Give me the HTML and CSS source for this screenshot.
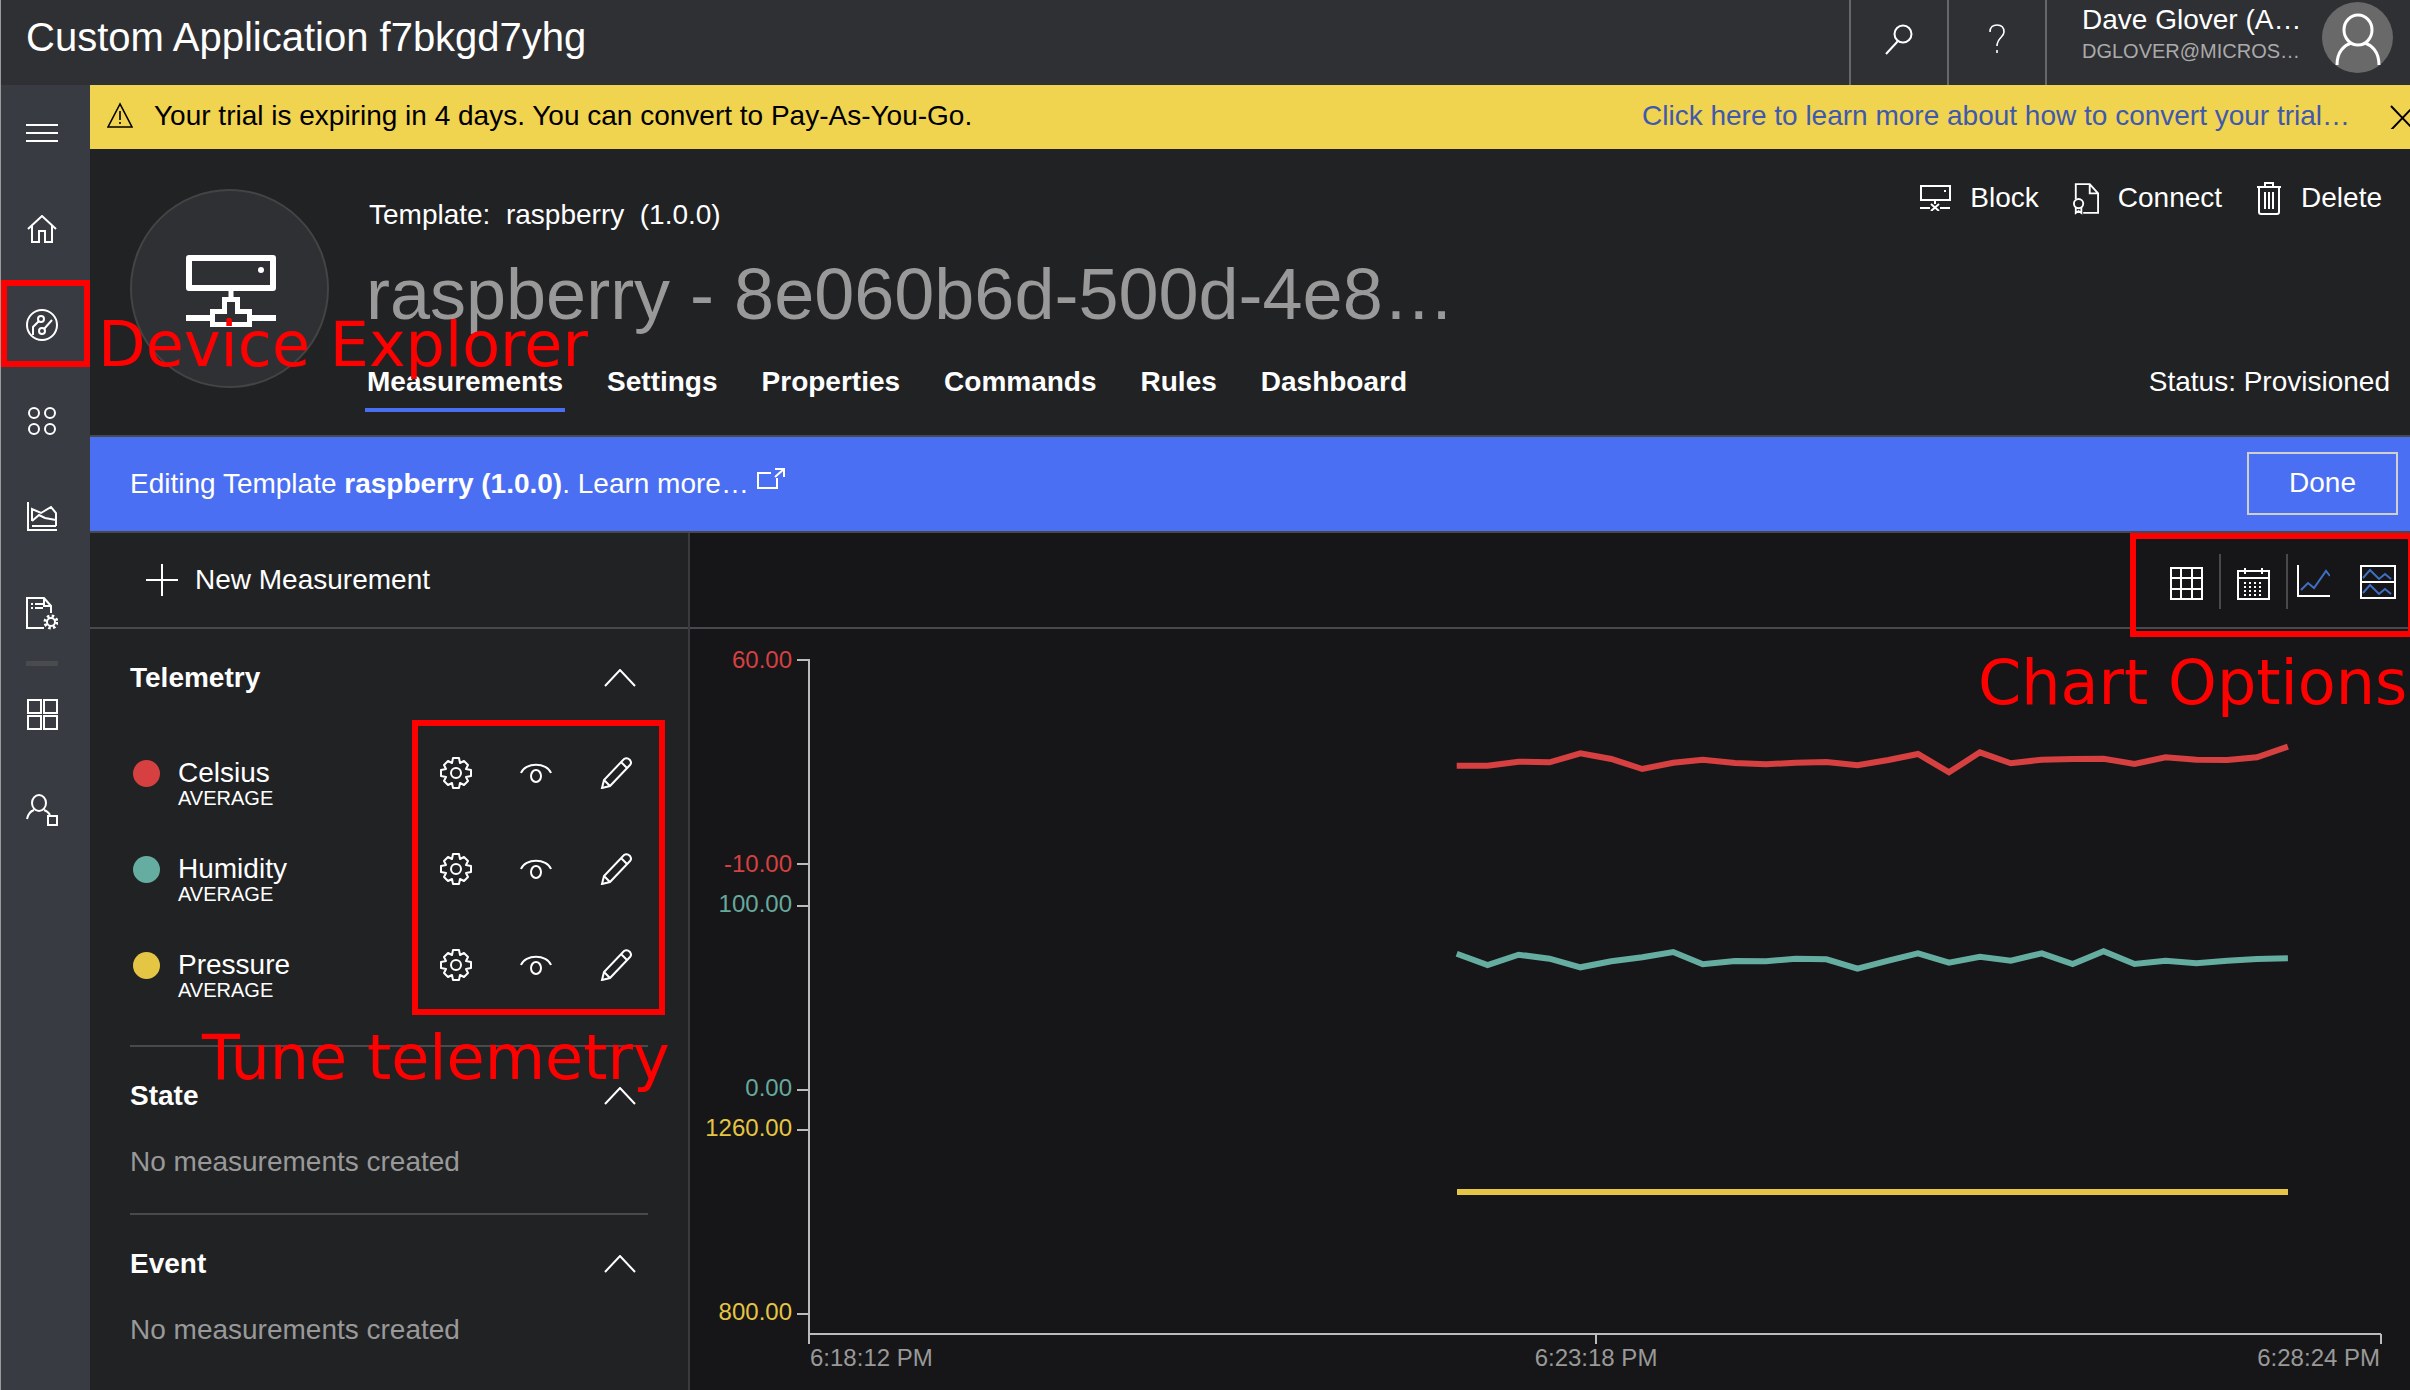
FILE: index.html

```html
<!DOCTYPE html>
<html lang="en">
<head>
    <meta charset="UTF-8">
    <title>Custom Application f7bkgd7yhg</title>
    <link rel="stylesheet" href="styles.css">
</head>
<body>

    <!-- Top bar -->
    <header class="topbar">
        <div class="app-title">Custom Application f7bkgd7yhg</div>
        <div class="top-cell">
            <svg width="30" height="32" viewBox="0 0 30 32" fill="none" stroke="#fff" stroke-width="2"><circle cx="19" cy="11" r="8.5"/><path d="M14 18L2 31"/></svg>
        </div>
        <div class="top-cell">
            <svg width="16" height="30" viewBox="0 0 16 30" fill="none" stroke="#fff" stroke-width="1.6"><path d="M1 8C1 3 4 1 8 1C12 1 15 3 15 8C15 13 8 14 8 22M8 26V29"/></svg>
        </div>
        <div class="user">
            <div class="user-text">
                <div class="user-name">Dave Glover (A…</div>
                <div class="user-mail">DGLOVER@MICROS…</div>
            </div>
            <div class="user-avatar">
                <svg width="46" height="52" viewBox="0 0 46 52" fill="none" stroke="#fff" stroke-width="3"><ellipse cx="23" cy="17" rx="14" ry="15"/><path d="M2 52C2 38 10 32 16 30M44 52C44 38 36 32 30 30"/></svg>
            </div>
        </div>
    </header>

    <div class="main">

        <!-- Left navigation -->
        <nav class="sidenav">
            <div class="nav-item">
                <svg width="32" height="20" viewBox="0 0 32 20" fill="none" stroke="#fff" stroke-width="2"><path d="M0 2H32M0 10H32M0 18H32"/></svg>
            </div>
            <div class="nav-item">
                <svg width="30" height="28" viewBox="0 0 30 28" fill="none" stroke="#fff" stroke-width="2"><path d="M1 14L15 1L29 14M5 11V27H12V16H18V27H25V11"/></svg>
            </div>
            <div class="nav-item">
                <svg width="32" height="32" viewBox="0 0 32 32" fill="none" stroke="#fff" stroke-width="2"><circle cx="16" cy="16" r="15"/><circle cx="15" cy="10" r="3"/><circle cx="16" cy="22" r="3"/><path d="M13 12L7 18V26M18 20L26 11"/></svg>
            </div>
            <div class="nav-item">
                <svg width="30" height="30" viewBox="0 0 30 30" fill="none" stroke="#fff" stroke-width="2"><circle cx="7" cy="7" r="5"/><circle cx="23" cy="7" r="5"/><circle cx="7" cy="23" r="5"/><circle cx="23" cy="23" r="5"/></svg>
            </div>
            <div class="nav-item">
                <svg width="30" height="30" viewBox="0 0 30 30" fill="none" stroke="#fff" stroke-width="2"><path d="M1 0V28H30M5 24H29M5 19L12 13L18 16L29 18M5 19V7L14 11L24 5L29 11V24"/></svg>
            </div>
            <div class="nav-item">
                <svg width="32" height="33" viewBox="0 0 32 33" fill="none" stroke="#fff" stroke-width="2"><path d="M18 31H1V1H18L25 9V16M18 1V9H25M5 7H7M9 7H17M5 11H7M9 11H17"/><circle cx="25" cy="25" r="4"/><circle cx="25" cy="25" r="6" stroke-dasharray="2.5 2.2" stroke-width="3"/></svg>
            </div>
            <div class="nav-divider"></div>
            <div class="nav-item">
                <svg width="31" height="31" viewBox="0 0 31 31" fill="none" stroke="#fff" stroke-width="2"><path d="M1 1H14V14H1ZM17 1H30V14H17ZM1 17H14V30H1ZM17 17H30V30H17Z"/></svg>
            </div>
            <div class="nav-item">
                <svg width="32" height="32" viewBox="0 0 32 32" fill="none" stroke="#fff" stroke-width="2"><ellipse cx="13" cy="9" rx="7" ry="8"/><path d="M1 25C2 20 5 17 8 16M18 16C21 17 23 19 24 21"/><path d="M22 23H31V32H22Z" transform="translate(0 -1)"/></svg>
            </div>
        </nav>

        <div class="content">

            <!-- Trial banner -->
            <div class="banner">
                <svg class="banner-icon" width="26" height="26" viewBox="0 0 26 26" fill="none" stroke="#000" stroke-width="1.6"><path d="M13 2L1 25H25Z"/><path d="M13 9V18M13 20V22"/></svg>
                <span class="banner-text">Your trial is expiring in 4 days. You can convert to Pay-As-You-Go.</span>
                <a class="banner-link">Click here to learn more about how to convert your trial…</a>
                <svg class="banner-close" width="20" height="24" viewBox="0 0 20 24" fill="none" stroke="#000" stroke-width="2"><path d="M1 1L24 25M24 1L1 25"/></svg>
            </div>

            <!-- Device header -->
            <section class="device-head">
                <div class="device-pic">
                    <svg width="90" height="72" viewBox="0 0 90 72" fill="none" stroke="#fff" stroke-width="6">
                        <path d="M3 3H87V33H3Z" stroke-linejoin="round"/>
                        <circle cx="75" cy="15" r="3" fill="#fff" stroke="none"/>
                        <path d="M45 36V42M38.5 44.5H51.5V56.5H63.5V69.5H26.5V56.5H38.5Z" stroke-width="5"/>
                        <path d="M0 63H24M66 63H90"/>
                        <rect x="41" y="63" width="4" height="7" fill="#f00" stroke="none"/>
                    </svg>
                </div>
                <div class="device-info">
                    <div class="template-line">Template:&nbsp; raspberry &nbsp;(1.0.0)</div>
                    <h1 class="device-name">raspberry - 8e060b6d-500d-4e8…</h1>
                    <div class="tabs">
                        <span class="tab tab-active">Measurements</span>
                        <span class="tab">Settings</span>
                        <span class="tab">Properties</span>
                        <span class="tab">Commands</span>
                        <span class="tab">Rules</span>
                        <span class="tab">Dashboard</span>
                    </div>
                </div>
                <div class="device-side">
                    <div class="actions">
                        <span class="action">
                            <svg width="32" height="26" viewBox="0 0 32 26" fill="none" stroke="#fff" stroke-width="2"><path d="M2 1H31V15H2ZM16 15V19M1 23H11M21 23H31M12 19L20 26M20 19L12 26"/><path d="M25 6H27"/></svg>
                            Block
                        </span>
                        <span class="action">
                            <svg width="26" height="33" viewBox="0 0 28 33" fill="none" stroke="#fff" stroke-width="2"><path d="M3 17V1H18L27 11V32H11M18 1V11H27"/><circle cx="6" cy="22" r="5"/><path d="M3 26V32L6 30L9 32V26"/></svg>
                            Connect
                        </span>
                        <span class="action">
                            <svg width="26" height="33" viewBox="0 0 26 33" fill="none" stroke="#fff" stroke-width="2"><path d="M1 5H25M3 5V30Q3 32 5 32H21Q23 32 23 30V5M9 5V1H17V5M9 10V27M13 10V27M17 10V27"/></svg>
                            Delete
                        </span>
                    </div>
                    <div class="status">Status: Provisioned</div>
                </div>
            </section>

            <!-- Editing bar -->
            <div class="edit-bar">
                <span class="edit-text">Editing Template <b>raspberry (1.0.0)</b>. Learn more…</span>
                <svg class="edit-link" width="28" height="22" viewBox="0 0 28 22" fill="none" stroke="#fff" stroke-width="2"><path d="M14 5H1V20H20V10M18 1H27V9M27 1L18 9"/></svg>
                <button class="done-btn">Done</button>
            </div>

            <div class="workspace">

                <!-- Measurements list -->
                <aside class="measures">
                    <div class="new-measure">
                        <svg width="32" height="32" viewBox="0 0 32 32" fill="none" stroke="#fff" stroke-width="2"><path d="M16 0V32M0 16H32"/></svg>
                        New Measurement
                    </div>
                    <div class="group">
                        <div class="group-head">
                            <span>Telemetry</span>
                            <svg class="chevron" width="32" height="18" viewBox="0 0 32 18" fill="none" stroke="#fff" stroke-width="2"><path d="M1 17L16 1L31 17"/></svg>
                        </div>
                        <div class="row">
                            <span class="dot dot-red"></span>
                            <div class="row-text"><div class="row-name">Celsius</div><div class="row-sub">AVERAGE</div></div>
                            <div class="row-icons">
                                <svg width="32" height="32"><use href="#ico-gear"/></svg>
                                <svg width="32" height="32"><use href="#ico-eye"/></svg>
                                <svg width="32" height="32"><use href="#ico-pen"/></svg>
                            </div>
                        </div>
                        <div class="row">
                            <span class="dot dot-teal"></span>
                            <div class="row-text"><div class="row-name">Humidity</div><div class="row-sub">AVERAGE</div></div>
                            <div class="row-icons">
                                <svg width="32" height="32"><use href="#ico-gear"/></svg>
                                <svg width="32" height="32"><use href="#ico-eye"/></svg>
                                <svg width="32" height="32"><use href="#ico-pen"/></svg>
                            </div>
                        </div>
                        <div class="row">
                            <span class="dot dot-yellow"></span>
                            <div class="row-text"><div class="row-name">Pressure</div><div class="row-sub">AVERAGE</div></div>
                            <div class="row-icons">
                                <svg width="32" height="32"><use href="#ico-gear"/></svg>
                                <svg width="32" height="32"><use href="#ico-eye"/></svg>
                                <svg width="32" height="32"><use href="#ico-pen"/></svg>
                            </div>
                        </div>
                    </div>
                    <div class="group group-empty">
                        <div class="group-head">
                            <span>State</span>
                            <svg class="chevron" width="32" height="18" viewBox="0 0 32 18" fill="none" stroke="#fff" stroke-width="2"><path d="M1 17L16 1L31 17"/></svg>
                        </div>
                        <div class="empty-note">No measurements created</div>
                    </div>
                    <div class="group group-empty">
                        <div class="group-head">
                            <span>Event</span>
                            <svg class="chevron" width="32" height="18" viewBox="0 0 32 18" fill="none" stroke="#fff" stroke-width="2"><path d="M1 17L16 1L31 17"/></svg>
                        </div>
                        <div class="empty-note">No measurements created</div>
                    </div>
                </aside>

                <!-- Chart -->
                <main class="chart-pane">
                    <div class="chart-tools">
                        <svg width="33" height="33" viewBox="0 0 33 33" fill="none" stroke="#fff" stroke-width="2"><path d="M1 1H32V32H1ZM11 1V32M22 1V32M1 11H32M1 22H32"/></svg>
                        <span class="tool-sep"></span>
                        <svg width="33" height="33" viewBox="0 0 33 33" fill="none" stroke="#fff" stroke-width="2"><path d="M1 4H32V32H1ZM1 11H32M8 1V7M25 1V7"/><path d="M7 16H26M7 20H26M7 24H26M7 28H26" stroke-dasharray="2 3"/></svg>
                        <span class="tool-sep"></span>
                        <svg class="tool-line" width="33" height="33" viewBox="0 0 33 33" fill="none"><path d="M1 0V31H33" stroke="#fff" stroke-width="2"/><path d="M4 25L11 18L17 23L29 6L33 11" stroke="#3f6fc4" stroke-width="2"/></svg>
                        <svg class="tool-area" width="36" height="34" viewBox="0 0 36 34" fill="none"><path d="M1 1H35V33H1ZM1 17H35" stroke="#fff" stroke-width="2"/><path d="M3 13L10 5L19 14L25 9L31 14M3 28L10 20L19 29L25 24L31 29" stroke="#3f6fc4" stroke-width="2"/></svg>
                    </div>
                    <svg class="chart" viewBox="690 628 1720 762" width="1720" height="762" font-family="'Liberation Sans', sans-serif" font-size="24">
                        <g stroke="#bbb" stroke-width="2" fill="none">
                            <path d="M809 659V1344M808 1334H2381"/>
                            <path d="M797 660H809M797 864H809M797 906H809M797 1090H809M797 1130H809M797 1314H809"/>
                            <path d="M1596 1334V1344M2381 1334V1344"/>
                        </g>
                        <g text-anchor="end">
                            <text x="792" y="668" fill="#d64040">60.00</text>
                            <text x="792" y="872" fill="#d64040">-10.00</text>
                            <text x="792" y="912" fill="#66a99d">100.00</text>
                            <text x="792" y="1096" fill="#66a99d">0.00</text>
                            <text x="792" y="1136" fill="#e4c544">1260.00</text>
                            <text x="792" y="1320" fill="#e4c544">800.00</text>
                        </g>
                        <g fill="#999">
                            <text x="810" y="1366">6:18:12 PM</text>
                            <text x="1596" y="1366" text-anchor="middle">6:23:18 PM</text>
                            <text x="2380" y="1366" text-anchor="end">6:28:24 PM</text>
                        </g>
                        <g fill="none" stroke-width="6">
                            <polyline stroke="#d64040" points="1456.7,765.7 1487.6,765.7 1518.6,761.7 1549.5,762.3 1580.4,753.3 1611.3,759 1642.3,769 1673.2,762.7 1702.8,759.7 1735,763 1766,764.3 1795.6,762.7 1826.5,762 1857.5,765.3 1888.4,760 1918,754 1949,772.3 1979.9,752.3 2010.8,763.3 2041.8,759.7 2072.7,759 2103.6,758.7 2134.5,764 2165.5,757.3 2196.4,759.7 2227.3,760 2257,757.3 2287.9,746.7"/>
                            <polyline stroke="#66ada1" points="1456.7,953.7 1487.6,965 1518.6,954.7 1549.5,958.7 1580.4,967.3 1611.3,961.3 1642.3,957.3 1673.2,952 1702.8,964.3 1735,961 1766,961.3 1795.6,958.7 1826.5,959.3 1857.5,968.7 1888.4,960.7 1918,953.3 1949,962.7 1979.9,956.7 2010.8,960.7 2041.8,953.3 2072.7,964 2103.6,951.3 2134.5,964 2165.5,960.7 2196.4,963.3 2227.3,960.7 2257,959 2287.9,958.3"/>
                            <path stroke="#e4c544" d="M1457 1192H2288"/>
                        </g>
                    </svg>
                </main>
            </div>
        </div>
    </div>

    <!-- Red annotations drawn over the screenshot -->
    <div class="mark mark-device"></div>
    <div class="mark mark-tune"></div>
    <div class="mark mark-chart"></div>
    <div class="mark-text text-device">Device Explorer</div>
    <div class="mark-text text-tune">Tune telemetry</div>
    <div class="mark-text text-chart">Chart Options</div>

    <!-- Shared row icons -->
    <svg class="icon-defs" width="0" height="0">
        <defs>
            <g id="ico-gear" fill="none" stroke="#fff" stroke-width="2">
                <circle cx="16" cy="16" r="5"/>
                <path d="M13 1H19L20 6L24 4L28 8L26 12L31 13V19L26 20L28 24L24 28L20 26L19 31H13L12 26L8 28L4 24L6 20L1 19V13L6 12L4 8L8 4L12 6Z" stroke-linejoin="round"/>
            </g>
            <g id="ico-eye" fill="none" stroke="#fff" stroke-width="2">
                <path d="M1 16C5 5 27 5 31 16"/>
                <ellipse cx="16" cy="19" rx="5" ry="6"/>
            </g>
            <g id="ico-pen" fill="none" stroke="#fff" stroke-width="2">
                <path d="M2 31L4 23L24 2Q27 0 30 3Q32 6 30 8L10 29ZM4 23L10 29M21 5L27 11"/>
            </g>
        </defs>
    </svg>

</body>
</html>
```

FILE: styles.css

```css
* {
    box-sizing: border-box;
}

html, body {
    margin: 0;
    height: 100%;
}

body {
    width: 2410px;
    height: 1390px;
    overflow: hidden;
    position: relative;
    padding-left: 1px;
    background-color: #9a9a9a;
    font-family: "Liberation Sans", Arial, sans-serif;
    font-size: 28px;
    color: #fff;
}

/* Top bar */
.topbar {
    display: flex;
    height: 85px;
    background-color: #2f3034;
}

.app-title {
    flex: 1;
    padding: 12px 0 0 25px;
    font-size: 40px;
    line-height: 50px;
}

.top-cell {
    display: flex;
    align-items: center;
    justify-content: center;
    width: 98px;
    border-left: 2px solid #66676a;
    padding-bottom: 8px;
}

.user {
    display: flex;
    width: 365px;
    border-left: 2px solid #66676a;
    padding-left: 35px;
}

.user-text {
    width: 240px;
}

.user-name {
    padding-top: 3px;
    line-height: 34px;
}

.user-mail {
    padding-top: 2px;
    font-size: 20px;
    line-height: 24px;
    color: #aaa;
}

.user-avatar {
    display: flex;
    align-items: flex-end;
    justify-content: center;
    width: 71px;
    height: 71px;
    margin-top: 2px;
    padding-bottom: 8px;
    border-radius: 50%;
    background-color: #696969;
}

.main {
    display: flex;
    height: 1305px;
}

/* Left navigation */
.sidenav {
    width: 89px;
    flex-shrink: 0;
    background-color: #383b42;
}

.nav-item {
    display: flex;
    align-items: center;
    justify-content: center;
    height: 96px;
    padding-right: 7px;
}

.nav-divider {
    width: 32px;
    height: 5px;
    margin-left: 25px;
    background-color: #4a4b4e;
}

.content {
    width: 2320px;
    flex-shrink: 0;
}

/* Banner */
.banner {
    display: flex;
    align-items: center;
    height: 64px;
    padding-left: 17px;
    background-color: #f0d34f;
    color: #000;
}

.banner-icon {
    margin-bottom: 4px;
}

.banner-text {
    flex: 1;
    margin: 0 0 2px 21px;
}

.banner-link {
    width: 748px;
    margin-bottom: 2px;
    color: #3f59ac;
}

.banner-close {
    flex-shrink: 0;
}

/* Device header */
.device-head {
    display: flex;
    height: 288px;
    border-bottom: 2px solid #48494c;
    background-color: #212224;
}

.device-pic {
    display: flex;
    align-items: center;
    justify-content: center;
    flex-shrink: 0;
    width: 199px;
    height: 199px;
    margin: 40px 0 0 40px;
    padding: 5px 0 0 3px;
    border: 2px solid #444;
    border-radius: 50%;
    background-color: #2f3034;
}

.device-info {
    flex: 1;
    padding: 48px 0 0 37px;
}

.template-line {
    padding-left: 3px;
    line-height: 36px;
}

.device-name {
    margin: 19px 0 0;
    font-size: 72px;
    font-weight: 400;
    line-height: 84px;
    color: #999;
}

.tabs {
    display: flex;
    gap: 40px;
    margin: 29px 0 0 -1px;
}

.tab {
    height: 47px;
    padding: 0 2px;
    font-weight: 700;
    line-height: 34px;
}

.tab-active {
    border-bottom: 4px solid #4a6ef0;
}

.device-side {
    display: flex;
    flex-direction: column;
    justify-content: space-between;
    align-items: flex-end;
    padding: 30px 20px 37px 0;
}

.actions {
    display: flex;
    gap: 34px;
    margin-right: 8px;
}

.action {
    display: flex;
    align-items: center;
    gap: 19px;
    height: 38px;
}

/* Editing bar */
.edit-bar {
    display: flex;
    align-items: center;
    height: 96px;
    padding: 0 12px 0 40px;
    border-bottom: 2px solid #48494c;
    background-color: #4b6ff2;
}

.edit-link {
    flex: 1;
    margin: 0 0 10px 8px;
    max-width: 28px;
}

.done-btn {
    width: 151px;
    height: 63px;
    margin-left: auto;
    margin-bottom: 2px;
    border: 2px solid #cfcfcf;
    background: none;
    color: #fff;
    font: inherit;
}

/* Workspace */
.workspace {
    display: flex;
    height: 857px;
}

.measures {
    width: 600px;
    flex-shrink: 0;
    border-right: 2px solid #3a3b3e;
    background-color: #212224;
}

.new-measure {
    display: flex;
    align-items: center;
    gap: 17px;
    height: 96px;
    padding-left: 56px;
    border-bottom: 2px solid #48494c;
}

.group {
    width: 518px;
    margin-left: 40px;
}

.group-head {
    display: flex;
    align-items: center;
    justify-content: space-between;
    height: 40px;
    margin-top: 29px;
    padding-right: 12px;
    font-weight: 700;
}

.row {
    display: flex;
    align-items: center;
    height: 96px;
}

.group-head + .row {
    margin-top: 27px;
}

.dot {
    width: 27px;
    height: 27px;
    margin-left: 3px;
    border-radius: 50%;
}

.dot-red { background-color: #d64040; }
.dot-teal { background-color: #66ada1; }
.dot-yellow { background-color: #e4c544; }

.row-text {
    width: 262px;
    height: 30px;
    margin-left: 18px;
}

.row-name {
    line-height: 30px;
}

.row-sub {
    font-size: 20px;
    line-height: 20px;
}

.row-icons {
    display: flex;
    gap: 48px;
}

.group-empty {
    border-top: 2px solid #48494c;
    height: 168px;
}

.group-empty:nth-child(3) {
    margin-top: 32px;
}

.empty-note {
    margin-top: 26px;
    line-height: 40px;
    color: #999;
}

/* Chart */
.chart-pane {
    flex: 1;
    background-color: #161618;
}

.chart-tools {
    display: flex;
    align-items: center;
    height: 96px;
    padding: 7px 0 0 1480px;
    border-bottom: 2px solid #48494c;
}

.tool-sep {
    width: 2px;
    height: 55px;
    margin: -4px 16px 0;
    background-color: #48494c;
}

.tool-line {
    margin: -5px 30px 0 -7px;
}

.tool-area {
    margin-top: -4px;
}

.chart {
    display: block;
    margin-top: -1px;
}

.icon-defs {
    position: absolute;
}

/* Annotations */
.mark {
    position: absolute;
    border: 6px solid #f00;
}

.mark-device {
    left: 1px;
    top: 280px;
    width: 89px;
    height: 87px;
}

.mark-tune {
    left: 412px;
    top: 720px;
    width: 253px;
    height: 295px;
}

.mark-chart {
    left: 2130px;
    top: 533px;
    width: 284px;
    height: 104px;
}

.mark-text {
    position: absolute;
    font-family: "DejaVu Sans", sans-serif;
    color: #f00;
    white-space: nowrap;
    line-height: 1;
}

.text-device {
    left: 98px;
    top: 314px;
    font-size: 62px;
}

.text-tune {
    left: 202px;
    top: 1027px;
    font-size: 62px;
}

.text-chart {
    left: 1978px;
    top: 652px;
    font-size: 62px;
}
```
